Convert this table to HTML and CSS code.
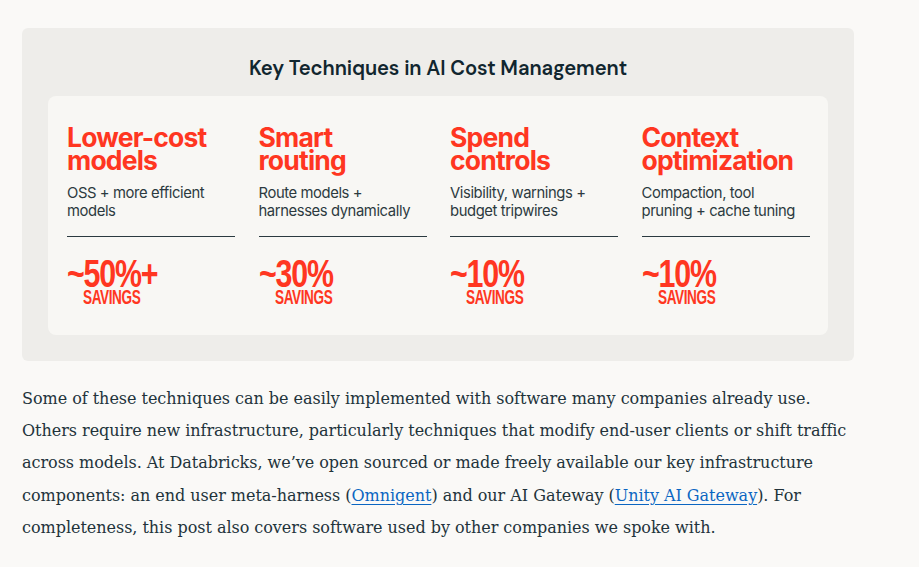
FILE: index.html
```
<!DOCTYPE html>
<html>
<head>
<meta charset="utf-8">
<link rel="stylesheet" href="styles.css">
</head>
<body>
<main class="page">
  <section class="figure">
    <h2 class="figure-title">Key Techniques in AI Cost Management</h2>
    <div class="panel">
      <div class="col">
        <h3 class="col-title">Lower-cost<br>models</h3>
        <p class="col-desc">OSS + more efficient<br>models</p>
        <hr class="rule">
        <div class="stat"><span class="num">~50%+</span><span class="label">SAVINGS</span></div>
      </div>
      <div class="col">
        <h3 class="col-title">Smart<br>routing</h3>
        <p class="col-desc">Route models +<br>harnesses dynamically</p>
        <hr class="rule">
        <div class="stat"><span class="num">~30%</span><span class="label">SAVINGS</span></div>
      </div>
      <div class="col">
        <h3 class="col-title">Spend<br>controls</h3>
        <p class="col-desc">Visibility, warnings +<br>budget tripwires</p>
        <hr class="rule">
        <div class="stat"><span class="num">~10%</span><span class="label">SAVINGS</span></div>
      </div>
      <div class="col">
        <h3 class="col-title">Context<br>optimization</h3>
        <p class="col-desc">Compaction, tool<br>pruning + cache tuning</p>
        <hr class="rule">
        <div class="stat"><span class="num">~10%</span><span class="label">SAVINGS</span></div>
      </div>
    </div>
  </section>
  <p class="body-text">Some of these techniques can be easily implemented with software many companies already use. Others require new infrastructure, particularly techniques that modify end-user clients or shift traffic across models. At Databricks, we’ve open sourced or made freely available our key infrastructure components: an end user meta-harness (<a href="#">Omnigent</a>) and our AI Gateway (<a href="#">Unity AI Gateway</a>). For completeness, this post also covers software used by other companies we spoke with.</p>
</main>
</body>
</html>
```
FILE: styles.css
```
* { box-sizing: border-box; }
html, body { margin: 0; padding: 0; }
body {
  background: #faf9f7;
  width: 919px;
  height: 567px;
  overflow: hidden;
}
.page {
  padding: 28px 0 0 22px;
  width: 876px;
}
.figure {
  background: #eeedea;
  border-radius: 6px;
  width: 832px;
  height: 333px;
  padding: 28px 26px 0 26px;
}
.figure-title {
  margin: 0;
  text-align: center;
  font-family: "DM Sans", Inter, "Noto Sans", sans-serif;
  font-weight: 600;
  font-size: 20.2px;
  line-height: 24px;
  color: #11262f;
  letter-spacing: -0.1px;
}
.panel {
  margin-top: 16px;
  background: #f8f7f4;
  border-radius: 8px;
  height: 239px;
  padding: 30px 19px 0 19px;
  display: grid;
  grid-template-columns: repeat(4, 168px);
  column-gap: 23.5px;
}
.col { display: flex; flex-direction: column; }
.col-title {
  margin: 0;
  font-family: Inter, "Noto Sans", sans-serif;
  font-weight: 700;
  font-size: 26.5px;
  line-height: 23px;
  letter-spacing: -0.8px;
  color: #ff3621;
}
.col-desc {
  margin: 12px 0 0 0;
  font-family: Inter, "Noto Sans", sans-serif;
  font-size: 14.8px;
  line-height: 18px;
  letter-spacing: -0.4px;
  color: #2c3a40;
  height: 36px;
}
.rule {
  margin: 16px 0 0 0;
  border: 0;
  border-top: 1px solid #2b3a40;
  height: 0;
}
.stat {
  margin-top: 22px;
  display: flex;
  flex-direction: column;
  align-items: flex-start;
  color: #ff3621;
  font-family: "Liberation Sans", Arial, sans-serif;
  font-weight: 700;
}
.num {
  display: inline-block;
  font-size: 38px;
  line-height: 30px;
  letter-spacing: -1.5px;
  transform: scaleX(0.8);
  transform-origin: left center;
}
.label {
  display: inline-block;
  font-size: 20px;
  line-height: 17px;
  margin-left: 16px;
  letter-spacing: -0.6px;
  transform: scaleX(0.68);
  transform-origin: left center;
}
.body-text {
  margin: 22px 0 0 0;
  width: 832px;
  font-family: "DejaVu Serif", serif;
  font-size: 16px;
  letter-spacing: -0.03px;
  line-height: 32.2px;
  color: #22333b;
}
.body-text a {
  color: #0b66c2;
  text-decoration: underline;
  text-underline-offset: 3px;
}
```
